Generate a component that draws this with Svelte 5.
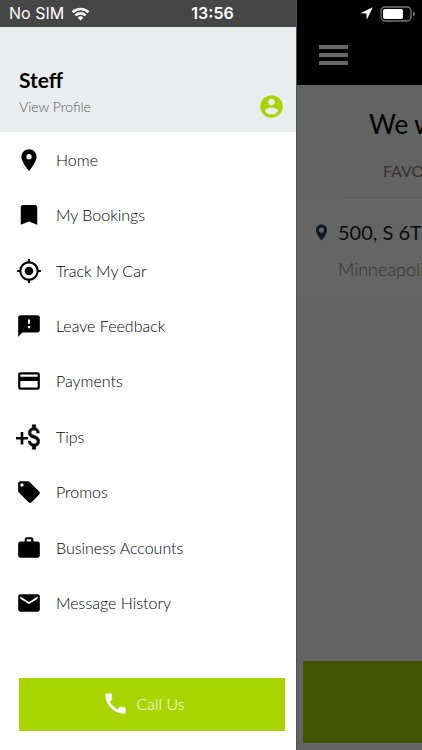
<script>
  const items = [
    { label: 'Home', path: 'M12 2C8.13 2 5 5.13 5 9c0 5.25 7 13 7 13s7-7.75 7-13c0-3.87-3.13-7-7-7zm0 9.5a2.5 2.5 0 0 1 0-5 2.5 2.5 0 0 1 0 5z' },
    { label: 'My Bookings', path: 'M17.6 2.700H6.400c-1.100 0-2 .9-2 2V21l7.600-3 7.600 3V4.700c0-1.100-.9-2-2-2z' },
    { label: 'Track My Car', path: 'M12 8c-2.21 0-4 1.79-4 4s1.79 4 4 4 4-1.79 4-4-1.79-4-4-4zm8.94 3A8.994 8.994 0 0 0 13 3.06V1h-2v2.06A8.994 8.994 0 0 0 3.06 11H1v2h2.06A8.994 8.994 0 0 0 11 20.94V23h2v-2.06A8.994 8.994 0 0 0 20.94 13H23v-2h-2.06zM12 19c-3.87 0-7-3.13-7-7s3.13-7 7-7 7 3.13 7 7-3.13 7-7 7z' },
    { label: 'Leave Feedback', path: 'M20 2H4c-1.1 0-1.99.9-1.99 2L2 22l4-4h14c1.1 0 2-.9 2-2V4c0-1.1-.9-2-2-2zm-7 12h-2v-2h2v2zm0-4h-2V6h2v4z' },
    { label: 'Payments', path: 'M20 4H4c-1.11 0-1.99.89-1.99 2L2 18c0 1.11.89 2 2 2h16c1.11 0 2-.89 2-2V6c0-1.11-.89-2-2-2zm0 14H4v-6h16v6zm0-10H4V6h16v2z' },
    { label: 'Tips', tips: true },
    { label: 'Promos', path: 'M21.41 11.58l-9-9C12.05 2.22 11.55 2 11 2H4c-1.1 0-2 .9-2 2v7c0 .55.22 1.05.59 1.42l9 9c.36.36.86.58 1.41.58.55 0 1.05-.22 1.41-.59l7-7c.37-.36.59-.86.59-1.41 0-.55-.23-1.06-.59-1.42zM5.5 7C4.67 7 4 6.33 4 5.5S4.67 4 5.5 4 7 4.67 7 5.5 6.33 7 5.5 7z' },
    { label: 'Business Accounts', path: 'M20 6h-4V4c0-1.11-.89-2-2-2h-4c-1.11 0-2 .89-2 2v2H4c-1.11 0-2 .89-2 2v11c0 1.11.89 2 2 2h16c1.11 0 2-.89 2-2V8c0-1.11-.89-2-2-2zm-6 0h-4V4h4v2z' },
    { label: 'Message History', path: 'M20 4H4c-1.1 0-1.99.9-1.99 2L2 18c0 1.1.9 2 2 2h16c1.1 0 2-.9 2-2V6c0-1.1-.9-2-2-2zm0 4l-8 5-8-5V6l8 5 8-5v2z' }
  ];
</script>

<div class="screen">
  <div class="status">
    <div class="carrier">
      <span>No SIM</span>
      <svg width="19" height="14" viewBox="0 0 20 15" fill="none" stroke="#fff" stroke-width="2.8" aria-hidden="true">
        <path d="M1.5 5.6a12.3 12.3 0 0 1 17 0M4.5 9a8 8 0 0 1 11 0" />
        <path d="M10 14.500l-3-3a4.300 4.300 0 0 1 6 0z" fill="#fff" stroke="none" />
      </svg>
    </div>
    <time>13:56</time>
    <div class="indicators">
      <svg width="13" height="13" viewBox="0 0 13 13" fill="#fff" aria-hidden="true">
        <path d="M12.8.2L.2 6.200l6.200.4.4 6.200z" />
      </svg>
      <svg width="36" height="16" viewBox="0 0 36 16" aria-hidden="true">
        <rect x="1" y="1" width="30" height="14" rx="4" fill="none" stroke="#777" stroke-width="1.3" />
        <rect x="3" y="3" width="20" height="10" rx="2" fill="#fff" />
        <path d="M33 5.5q2 .8 2 2.5t-2 2.5z" fill="#777" />
      </svg>
    </div>
  </div>

  <aside class="drawer">
    <header class="profile">
      <div>
        <h1>Steff</h1>
        <a href="#profile">View Profile</a>
      </div>
      <svg width="27" height="27" viewBox="0 0 24 24" fill="#a8d400" aria-hidden="true">
        <path d="M12 2C6.48 2 2 6.48 2 12s4.48 10 10 10 10-4.48 10-10S17.52 2 12 2zm0 3c1.66 0 3 1.34 3 3s-1.34 3-3 3-3-1.34-3-3 1.34-3 3-3zm0 14.2a7.2 7.2 0 0 1-6-3.22c.03-1.99 4-3.08 6-3.08 1.99 0 5.97 1.09 6 3.08a7.2 7.2 0 0 1-6 3.22z" />
      </svg>
    </header>
    <nav>
      {#each items as item}
        <a href="#menu">
          {#if item.tips}
            <svg width="26" height="26" viewBox="0 0 26 26" aria-hidden="true">
              <path d="M4.7 8h2.600v4.900h4.700v2.600H7.300v4.900H4.700v-4.900H0v-2.600h4.700z" />
              <path stroke="#000" stroke-width=".5" transform="translate(5 -3.2) scale(1.13 1.35)" d="M11.8 10.9c-2.27-.59-3-1.2-3-2.15 0-1.09 1.01-1.85 2.7-1.85 1.78 0 2.44.85 2.5 2.1h2.21c-.07-1.72-1.12-3.3-3.21-3.81V3h-3v2.16c-1.94.42-3.5 1.68-3.5 3.61 0 2.31 1.91 3.46 4.7 4.13 2.5.6 3 1.48 3 2.41 0 .69-.49 1.79-2.7 1.79-2.06 0-2.87-.92-2.98-2.1h-2.2c.12 2.19 1.76 3.42 3.68 3.83V21h3v-2.15c1.95-.37 3.5-1.5 3.5-3.55 0-2.84-2.43-3.81-4.7-4.4z" />
            </svg>
          {:else}
            <svg width="26" height="26" viewBox="0 0 24 24" aria-hidden="true"><path d={item.path} /></svg>
          {/if}
          <span>{item.label}</span>
        </a>
      {/each}
    </nav>
    <button class="call" type="button">
      <svg width="27" height="27" viewBox="0 0 24 24" fill="#fff" aria-hidden="true">
        <path d="M20.01 15.38c-1.23 0-2.42-.2-3.53-.56a.977.977 0 0 0-1.01.24l-1.57 1.97c-2.83-1.35-5.48-3.9-6.89-6.83l1.95-1.66c.27-.28.35-.67.24-1.02-.37-1.11-.56-2.3-.56-3.53 0-.54-.45-.99-.99-.99H4.19C3.65 3 3 3.24 3 3.99 3 13.28 10.73 21 20.01 21c.71 0 .99-.63.99-1.18v-3.45c0-.54-.45-.99-.99-.99z" />
      </svg>
      <span>Call Us</span>
    </button>
  </aside>

  <main>
    <div class="topbar">
      <button class="burger" type="button" aria-label="Menu"><i></i><i></i><i></i></button>
    </div>
    <h2>We w</h2>
    <div class="tabs"><button type="button">FAVO</button></div>
    <section class="place">
      <svg width="19" height="19" viewBox="0 0 24 24" fill="#101820" aria-hidden="true">
        <path fill-rule="evenodd" d="M12 2C8.13 2 5 5.13 5 9c0 5.25 7 13 7 13s7-7.75 7-13c0-3.87-3.13-7-7-7zm0 10.2a3.2 3.2 0 1 1 0-6.4 3.2 3.2 0 0 1 0 6.4z" />
      </svg>
      <div>
        <strong>500, S 6T</strong>
        <p>Minneapoli</p>
      </div>
    </section>
    <button class="confirm" type="button" aria-label="Confirm"></button>
  </main>
</div>

<style>
  .screen {
    position: relative;
    display: grid;
    grid-template-columns: 296px minmax(0, 1fr);
    min-height: 100vh;
    overflow: hidden;
    font-family: Lato, "Open Sans", sans-serif;
    background: #636363;
  }
  h1, h2, p { margin: 0; font-weight: 400; }
  button { border: 0; padding: 0; font: inherit; cursor: pointer; }
  a { color: inherit; text-decoration: none; }
  svg { display: block; flex: none; }

  .status {
    position: absolute;
    z-index: 1;
    inset: 0 0 auto;
    height: 27px;
    padding: 0 6px 0 9px;
    display: grid;
    grid-template-columns: 1fr auto 1fr;
    align-items: center;
    font: 16px/27px Inter, sans-serif;
    color: #fff;
  }
  .carrier, .indicators { display: flex; align-items: center; gap: 7px; }
  .indicators { justify-content: flex-end; }
  time { font-weight: 600; }

  .drawer {
    display: flex;
    flex-direction: column;
    border-top: 27px solid #464646;
    background: #fff;
  }
  .profile {
    display: flex;
    justify-content: space-between;
    align-items: flex-end;
    height: 105px;
    box-sizing: border-box;
    padding: 0 11px 12px 19px;
    background: #e9edee;
  }
  h1 { font-size: 21px; line-height: 28px; font-weight: 700; color: #000; }
  .profile a { display: block; font-size: 14px; line-height: 26px; font-weight: 300; color: #555; }
  nav {
    flex: 1;
    display: grid;
    grid-auto-rows: 1fr;
    padding-bottom: 47px;
  }
  nav a {
    display: flex;
    align-items: center;
    gap: 14px;
    padding-left: 16px;
    font-size: 16px;
    line-height: 24px;
    font-weight: 300;
    color: #000;
  }
  .call {
    display: flex;
    align-items: center;
    justify-content: center;
    gap: 8px;
    height: 53px;
    margin: 0 11px 19px 19px;
    padding: 0 18px 3px 0;
    background: #a8d400;
    color: #fff;
    font-size: 16px;
    font-weight: 300;
  }

  main {
    display: flex;
    flex-direction: column;
    overflow: hidden;
    white-space: nowrap;
    border-left: 1px solid #505050;
  }
  .topbar {
    height: 85px;
    box-sizing: border-box;
    padding: 45px 0 0 23px;
    margin-left: -1px;
    background: #000;
  }
  .burger { display: grid; gap: 4px; width: 29px; background: none; }
  .burger i { height: 4px; background: #686868; }
  h2 { padding: 20px 0 0 72px; font-size: 26px; line-height: 38px; color: #000; }
  .tabs {
    margin-left: 47px;
    padding: 13px 0 11px 39px;
    border-bottom: 1px solid #5a5555;
  }
  .tabs button { background: none; color: #333; font-size: 16px; line-height: 30px; }
  .place {
    display: flex;
    gap: 7px;
    padding: 18px 0 12px 15px;
    background: #656565;
  }
  .place svg { margin-top: 7px; }
  .place strong { display: block; font-size: 20px; line-height: 32px; font-weight: 400; color: #0c0c0c; }
  .place p { padding-top: 5px; font-size: 18px; line-height: 32px; font-weight: 300; color: #333; }
  .confirm { height: 82px; margin: auto 0 7px 6px; background: #435400; }
</style>
